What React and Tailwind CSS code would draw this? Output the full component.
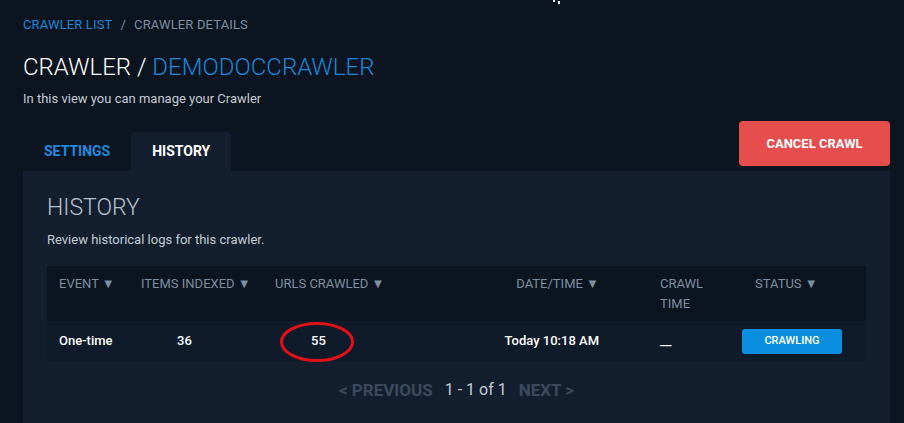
import React from "react";

export default function App() {
  return (
    <div
      className="relative w-[904px] h-[423px] overflow-hidden bg-[#0b141f] text-white"
      style={{ fontFamily: "Roboto, 'Liberation Sans', sans-serif" }}
    >
      {/* mouse cursor tail */}
      <svg className="absolute left-[551px] top-0" width="12" height="6" viewBox="0 0 12 6">
        <rect x="2" y="0" width="2" height="2" fill="#ffffff" />
        <rect x="7" y="1" width="2" height="3" fill="#ffffff" />
      </svg>

      <div className="pl-[23px] pt-[15px] w-[890px]">
        {/* breadcrumb */}
        <div className="text-[13px] leading-[20px] font-normal tracking-[0.15px]">
          <span className="text-[#1a86d9]">CRAWLER LIST</span>
          <span className="text-[#7d8fa3] mx-[8px]">/</span>
          <span className="text-[#7d8fa3]">CRAWLER DETAILS</span>
        </div>

        {/* title */}
        <h1 className="mt-[16px] text-[24px] leading-[32px] font-light">
          <span className="text-white">CRAWLER / </span>
          <span className="text-[#1a86d9]">DEMODOCCRAWLER</span>
        </h1>
        <p className="mt-[8px] text-[13px] leading-[16px] text-[#c4ccd5]">
          In this view you can manage your Crawler
        </p>

        {/* tabs row */}
        <div className="mt-[14px] flex items-end justify-between">
          <div className="flex">
            <div className="h-[39px] px-[21px] flex items-center text-[14px] font-bold text-[#1a8ae0]">
              SETTINGS
            </div>
            <div className="h-[39px] px-[21px] flex items-center text-[14px] font-bold text-white bg-[#131f2f] rounded-t-[4px]">
              HISTORY
            </div>
          </div>
          <button className="mb-[5px] w-[151px] h-[45px] rounded-[4px] bg-[#e64d4d] text-white text-[13px] font-bold">
            CANCEL CRAWL
          </button>
        </div>

        {/* panel */}
        <div className="bg-[#131f2f] h-[260px] w-[867px] px-[24px] pt-[21px]">
          <h2 className="text-[23px] leading-[32px] font-light text-[#b9c1ca]">HISTORY</h2>
          <p className="mt-[8px] text-[13px] leading-[16px] text-[#c4ccd5]">
            Review historical logs for this crawler.
          </p>

          {/* table */}
          <div className="mt-[18px] w-[819px]">
            <div className="grid grid-cols-[82px_134px_242px_143px_94px_124px] h-[55px] bg-[#0b141f] text-[13px] leading-[20px] text-[#7d8fa3] pt-[8px] whitespace-nowrap">
              <div className="pl-[12px]">EVENT ▼</div>
              <div className="pl-[12px]">ITEMS INDEXED ▼</div>
              <div className="pl-[12px]">URLS CRAWLED ▼</div>
              <div className="text-right pr-[49px]">DATE/TIME ▼</div>
              <div className="pl-[12px]">
                CRAWL
                <br />
                TIME
              </div>
              <div className="pl-[13px]">STATUS ▼</div>
            </div>
            <div className="grid grid-cols-[82px_134px_242px_143px_94px_124px] h-[40px] items-center bg-[#0f1a2a] text-[13px] font-medium text-white whitespace-nowrap">
              <div className="pl-[12px]">One-time</div>
              <div className="pl-[48px]">36</div>
              <div className="relative h-full flex items-center pl-[48px]">
                55
                <svg
                  className="absolute left-[16px] top-0"
                  width="76"
                  height="42"
                  viewBox="0 0 76 42"
                >
                  <ellipse cx="38" cy="21" rx="35.5" ry="18.5" fill="none" stroke="#e01218" strokeWidth="3" />
                </svg>
              </div>
              <div className="flex justify-end pr-[49px]">Today 10:18 AM</div>
              <div className="pl-[12px]">__</div>
              <div>
                <div className="w-[100px] h-[25px] rounded-[3px] bg-[#0a8fe0] flex items-center justify-center text-[11px] font-medium">
                  CRAWLING
                </div>
              </div>
            </div>

            {/* pagination */}
            <div className="mt-[17px] flex justify-center items-center gap-[12px] leading-[24px]">
              <span className="text-[17px] font-bold text-[#3b4a5e]">&lt; PREVIOUS</span>
              <span className="text-[16px] text-[#c6ccd4]">1 - 1 of 1</span>
              <span className="text-[17px] font-bold text-[#3b4a5e]">NEXT &gt;</span>
            </div>
          </div>
        </div>
      </div>
    </div>
  );
}
